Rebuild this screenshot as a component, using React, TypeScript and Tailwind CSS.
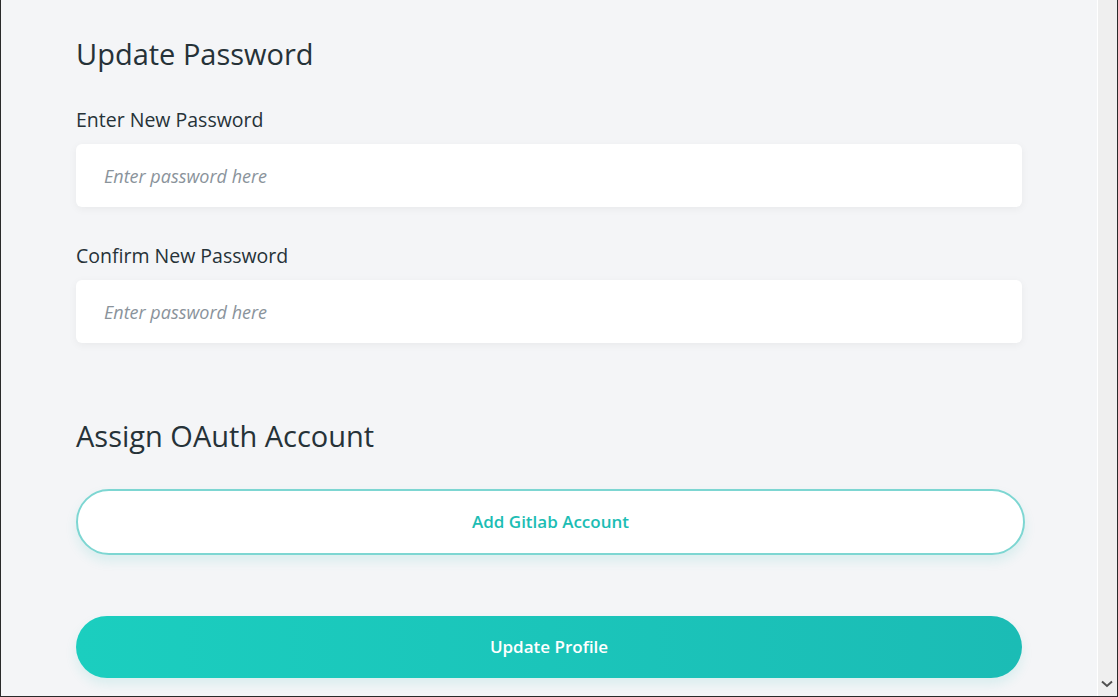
const font = "font-['Open_Sans','Noto_Sans',sans-serif]"

function Field({ label }: { label: string }) {
  return (
    <div className="flex flex-col">
      <label className="text-[19.5px] leading-[26px] text-[#263238] mb-[11px]">{label}</label>
      <input
        type="password"
        placeholder="Enter password here"
        className="h-[63px] w-full rounded-[6px] bg-white px-[28px] text-[18px] shadow-[0_2px_8px_rgba(0,0,0,0.05)] outline-none placeholder:italic placeholder:text-[#8a939b]"
      />
    </div>
  )
}

export default function App() {
  return (
    <div className={`${font} flex h-[697px] w-[1118px] overflow-hidden border-l border-b border-[#2a2a2a] bg-[#f4f5f7]`}>
      {/* main column */}
      <div className="flex-1 border-r border-white pl-[75px] pr-[75px] pt-[34px]">
        <h2 className="text-[29px] leading-[40px] text-[#263238] mb-[33px]">Update Password</h2>

        <div className="flex flex-col gap-[36px]">
          <Field label="Enter New Password" />
          <Field label="Confirm New Password" />
        </div>

        <h2 className="mt-[73px] text-[29px] leading-[40px] text-[#263238]">Assign OAuth Account</h2>

        <button className="mt-[33px] -mr-[3px] flex h-[66px] w-[calc(100%+3px)] items-center justify-center rounded-full border-2 border-[#7dd6d2] bg-white text-[17px] font-semibold text-[#1cbdb4] shadow-[0_6px_12px_rgba(28,189,180,0.12)]">
          Add Gitlab Account
        </button>

        <button className="mt-[61px] flex h-[62px] w-full items-center justify-center rounded-full bg-gradient-to-r from-[#1bcebf] to-[#1bbcb5] text-[17px] font-semibold text-white shadow-[0_6px_12px_rgba(28,189,180,0.12)]">
          Update Profile
        </button>
      </div>

      {/* scrollbar */}
      <div className="relative w-[20px] border-r border-[#2a2a2a] bg-[#efefef]">
        <svg className="absolute bottom-[8px] left-[3px]" width="12" height="8" viewBox="0 0 12 8">
          <path d="M1 1.5 L6 6 L11 1.5" fill="none" stroke="#505050" strokeWidth="2" />
        </svg>
      </div>
    </div>
  )
}
